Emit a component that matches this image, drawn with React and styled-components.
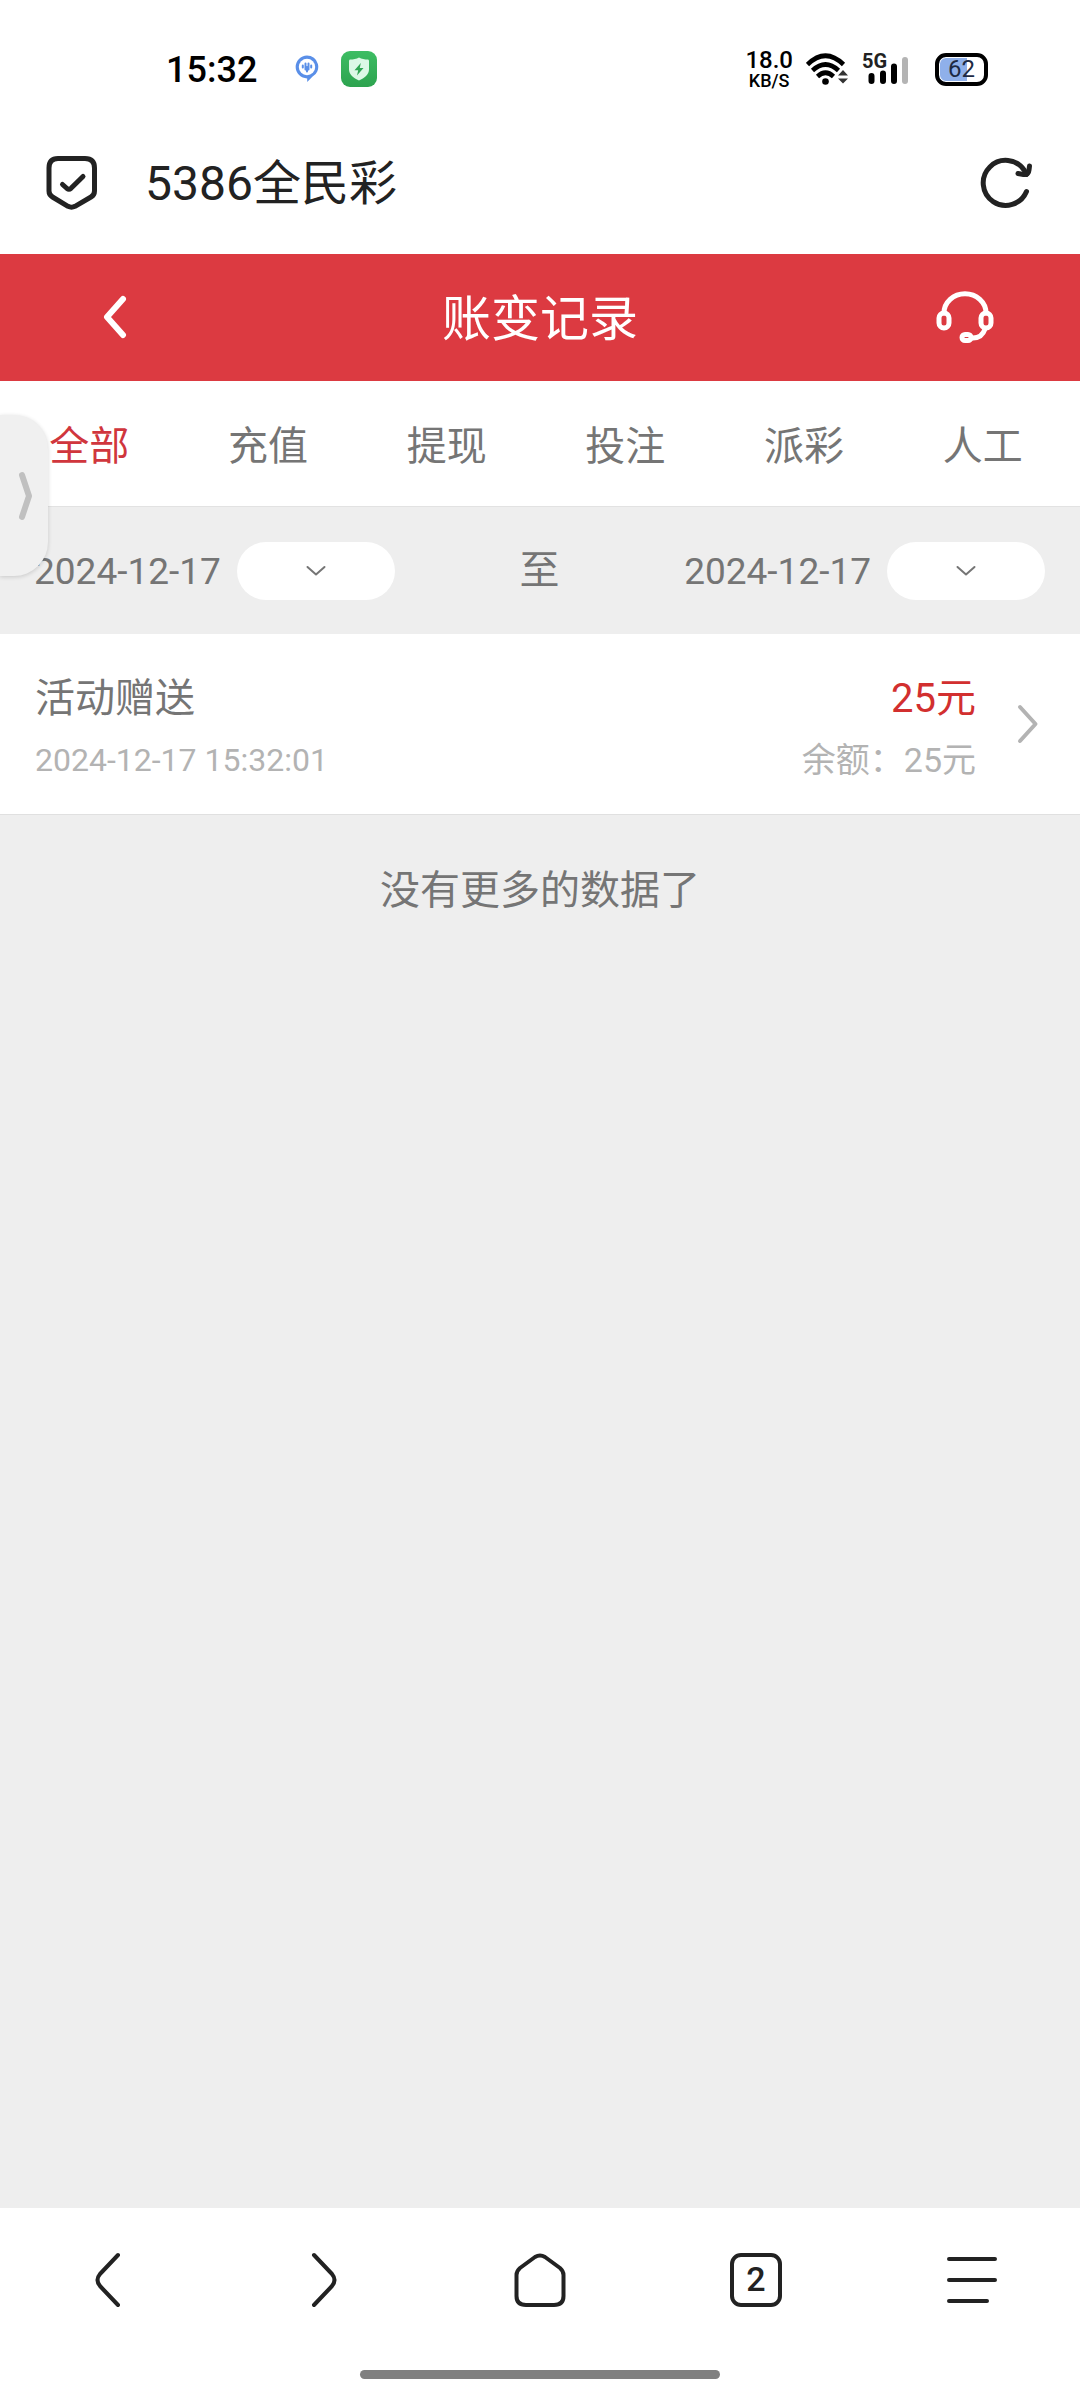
import { useState } from 'react';
import styled, { createGlobalStyle } from 'styled-components';

const GlobalStyle = createGlobalStyle`
	* {
		box-sizing: border-box;
	}

	body {
		margin: 0;
		background: #eee;
		font-family: Roboto, "Noto Sans CJK SC", sans-serif;
		color: #757575;
	}

	button, select {
		margin: 0;
		padding: 0;
		border: 0;
		background: none;
		color: inherit;
		font: inherit;
		cursor: pointer;
	}

	svg {
		display: block;
		flex: none;
	}
`;

const Page = styled.div`
	display: flex;
	flex-direction: column;
	min-height: 100vh;
`;

const StatusBar = styled.div`
	display: flex;
	align-items: center;
	justify-content: space-between;
	height: 110px;
	padding: 28px 92px 0 166px;
	background: #fff;
	color: #000;
`;

const StatusGroup = styled.div`
	display: flex;
	align-items: center;
	gap: ${({ $gap }) => $gap}px;
`;

const Clock = styled.time`
	margin-right: 16px;
	padding-top: 2px;
	font-size: 36px;
	font-weight: 500;
	line-height: 40px;
`;

const NetSpeed = styled.div`
	display: flex;
	flex-direction: column;
	align-items: center;
	font-size: 18px;
	font-weight: 500;
	line-height: 18px;

	strong {
		font-size: 24px;
		font-weight: 500;
		line-height: 24px;
	}
`;

const Signal = styled.div`
	position: relative;

	span {
		position: absolute;
		top: 0;
		left: 0;
		font-size: 20px;
		font-weight: 700;
		line-height: 16px;
		color: #222;
	}
`;

const Battery = styled.div`
	width: 53px;
	height: 33px;
	margin-left: 12px;
	border: 4px solid #000;
	border-radius: 11px;
	background: linear-gradient(90deg, #8fb0ea 62%, #fff 62%);
	box-shadow: inset 0 0 0 1px #fff;
	font-size: 24px;
	line-height: 25px;
	text-align: center;
	color: #1d2a44;
`;

const BrowserBar = styled.div`
	display: flex;
	align-items: center;
	height: 144px;
	padding: 0 46px;
	background: #fff;
	color: #222;
`;

const SiteTitle = styled.div`
	flex: 1;
	margin-left: 48px;
	padding-top: 4px;
	font-size: 48px;
	line-height: 64px;
`;

const IconButton = styled.button`
	display: flex;
	align-items: center;
	justify-content: center;
`;

const Header = styled.header`
	display: flex;
	align-items: center;
	justify-content: space-between;
	height: 127px;
	padding: 0 85px;
	background: #dc3a41;
	color: #fff;

	${IconButton} {
		width: 60px;
		height: 60px;
	}
`;

const Title = styled.h1`
	margin: 0;
	padding-top: 4px;
	font-size: 49px;
	font-weight: 400;
	line-height: 64px;
`;

const Tabs = styled.nav`
	display: flex;
	height: 125px;
	padding-right: 8px;
	background: #fff;
`;

const Tab = styled.button`
	flex: 1;
	padding-top: 6px;
	font-size: 40px;
	line-height: 56px;
	color: ${({ $active }) => ($active ? '#d0363d' : '#757575')};
`;

const Filters = styled.div`
	display: flex;
	align-items: center;
	justify-content: space-between;
	height: 128px;
	padding: 0 35px 0 34px;
	border-top: 1px solid #e2e2e2;
	font-size: 40px;
	line-height: 56px;
`;

const DateField = styled.div`
	display: flex;
	align-items: center;
	gap: 16px;

	label {
		padding-top: 2px;
		font-size: 37px;
	}
`;

const Picker = styled.div`
	position: relative;

	select {
		display: block;
		width: 158px;
		height: 58px;
		border-radius: 29px;
		background: #fff;
		appearance: none;
	}

	svg {
		position: absolute;
		inset: 0;
		margin: auto;
		pointer-events: none;
	}
`;

const Record = styled.a`
	display: flex;
	align-items: center;
	height: 181px;
	padding: 0 41px 0 35px;
	border-bottom: 1px solid #e0e0e0;
	background: #fff;
	color: inherit;
	text-decoration: none;
`;

const RecordText = styled.div`
	display: flex;
	flex: 1;
	flex-direction: column;
	gap: 5px;
	align-items: ${({ $end }) => ($end ? 'flex-end' : 'flex-start')};
	margin-right: ${({ $end }) => ($end ? 41 : 0)}px;
	padding-top: 10px;
`;

const Main = styled.span`
	font-size: 40px;
	line-height: 56px;
	color: ${({ $red }) => ($red ? '#d22f2f' : '#757575')};
`;

const Sub = styled.span`
	font-size: ${({ $size }) => $size}px;
	line-height: 56px;
	color: #b3b3b3;
`;

const NoMore = styled.p`
	flex: 1;
	margin: 0;
	padding-top: 48px;
	font-size: 40px;
	line-height: 56px;
	text-align: center;
`;

const BottomNav = styled.nav`
	display: grid;
	grid-template-columns: repeat(5, 1fr);
	height: 144px;
	background: #fff;
	color: #222;
`;

const TabCount = styled.span`
	width: 52px;
	height: 54px;
	border: 4px solid #222;
	border-radius: 11px;
	font-size: 34px;
	font-weight: 500;
	line-height: 44px;
	text-align: center;
`;

const GestureArea = styled.div`
	display: flex;
	justify-content: center;
	height: 48px;
	padding-top: 18px;
	background: #fff;

	&::before {
		content: '';
		width: 33.33%;
		height: 9px;
		border-radius: 5px;
		background: #808080;
	}
`;

const Drawer = styled.button`
	position: absolute;
	top: 415px;
	left: 0;
	display: flex;
	align-items: center;
	justify-content: flex-end;
	width: 48px;
	height: 161px;
	padding-right: 15px;
	border-radius: 0 34px 34px 0;
	background: #f0f0f0;
	box-shadow: 0 1px 4px rgba(0, 0, 0, 0.16);
`;

const Stroke = ({ w, h, size = 4, color = 'currentColor', children }) => (
	<svg
		width={w}
		height={h}
		viewBox={`0 0 ${w} ${h}`}
		fill="none"
		stroke={color}
		strokeWidth={size}
		strokeLinecap="round"
		strokeLinejoin="round"
		aria-hidden="true"
	>
		{children}
	</svg>
);

const VoiceIcon = () => (
	<svg width="24" height="28" viewBox="0 0 24 28" aria-hidden="true">
		<path d="M12 0.5a11.3 11.3 0 0 1 5.6 21.1L12.2 27v-3.6A11.4 11.4 0 0 1 12 .5z" fill="#5a8fe8" />
		<circle cx="12" cy="12" r="8.2" fill="#fff" />
		<path d="M7.800 10.500v2M10.500 8.500v6M13.500 8.500v6M16.200 10.500v2M12 12v4.500" stroke="#5a8fe8" strokeWidth="2" strokeLinecap="round" />
	</svg>
);

const GuardIcon = () => (
	<svg width="36" height="36" viewBox="0 0 36 36" aria-hidden="true">
		<defs>
			<linearGradient id="guard" x1="0" y1="0" x2="0" y2="1">
				<stop offset="0" stopColor="#3dbd63" />
				<stop offset="1" stopColor="#2da34f" />
			</linearGradient>
		</defs>
		<rect width="36" height="36" rx="9" fill="url(#guard)" />
		<path d="M18 6.500c2.500 1.500 6 2 8.500 2 1 0 1.500.6 1.500 1.500v8.500c0 5-4.500 8.500-10 11-5.500-2.500-10-6-10-11V10c0-.9.5-1.500 1.500-1.500 2.500 0 6-.5 8.500-2z" fill="#dcf8e6" />
		<path d="M19.800 12l-6.300 7.300h3.700L16 24.500l6.500-7.500h-3.700z" fill="#2fa552" />
	</svg>
);

const WifiIcon = () => (
	<svg width="43" height="32" viewBox="0 0 43 32" fill="none" aria-hidden="true">
		<path d="M1.500 11.500Q19.500-6 37.500 11.500M6.500 17.500Q19.500 5.500 32.500 17.500M11.500 23.500Q19.500 16 27.500 23.500" stroke="#000" strokeWidth="4.600" />
		<circle cx="19.500" cy="28.500" r="3.300" fill="#000" />
		<path d="M32 22.500l5-5.500 5 5.500zM32 25.500l5 5 5-5z" fill="#333" />
	</svg>
);

const BarsIcon = () => (
	<svg width="48" height="32" viewBox="0 0 48 32" strokeWidth="6" strokeLinecap="round" aria-hidden="true">
		<path d="M9.500 23v5M21 20.500v7.500M32 13.500v14.500" stroke="#000" />
		<path d="M43 7v21" stroke="#b4b4b4" />
	</svg>
);

const tabs = ['全部', '充值', '提现', '投注', '派彩', '人工'];

const records = [
	{ id: 1, name: '活动赠送', time: '2024-12-17 15:32:01', amount: '25元', balance: '25元' },
];

const DatePicker = ({ id, date }) => (
	<DateField>
		<label htmlFor={id}>{date}</label>
		<Picker>
			<select id={id} defaultValue="">
				<option value="" />
			</select>
			<Stroke w={20} h={12} size={2}>
				<path d="M1.500 2L10 9.500 18.500 2" />
			</Stroke>
		</Picker>
	</DateField>
);

const App = () => {
	const [active, setActive] = useState(tabs[0]);

	return (
		<Page>
			<GlobalStyle />
			<StatusBar>
				<StatusGroup $gap={22}>
					<Clock>15:32</Clock>
					<VoiceIcon />
					<GuardIcon />
				</StatusGroup>
				<StatusGroup $gap={13}>
					<NetSpeed>
						<strong>18.0</strong>
						<span>KB/S</span>
					</NetSpeed>
					<WifiIcon />
					<Signal>
						<BarsIcon />
						<span>5G</span>
					</Signal>
					<Battery>62</Battery>
				</StatusGroup>
			</StatusBar>

			<BrowserBar>
				<Stroke w={51} h={56} size={5}>
					<path d="M12 4.500H39Q48.500 4.500 48.500 14V37Q48.500 41 45 43L29 52.300Q25.500 54 22 52.300L6.500 43Q3 41 3 37V14Q3 4.500 12 4.500z" />
					<path d="M16.500 30.500L21 34.500Q23 36 25 34.300L37 22.500" />
				</Stroke>
				<SiteTitle>5386全民彩</SiteTitle>
				<IconButton type="button" aria-label="刷新">
					<Stroke w={54} h={54} size={5}>
						<path d="M46.500 36.500A22.500 22.500 0 1 1 44.500 15.500L46.500 19.500" />
						<path d="M38 18.500L43.500 19.500Q48.500 20 49 15L49.500 11" />
					</Stroke>
				</IconButton>
			</BrowserBar>

			<Header>
				<IconButton type="button" aria-label="返回">
					<Stroke w={24} h={46} size={6}>
						<path d="M20 4L4 22 20 40" />
					</Stroke>
				</IconButton>
				<Title>账变记录</Title>
				<IconButton type="button" aria-label="客服">
					<Stroke w={58} h={54} size={5}>
						<path d="M8 22A21 19.300 0 0 1 50 22" />
						<rect x="3" y="22" width="10" height="15" rx="5" />
						<rect x="45" y="22" width="10" height="15" rx="5" />
						<path d="M49 38Q46 47 37 47" />
						<rect x="26" y="43.500" width="9" height="6" rx="3" />
					</Stroke>
				</IconButton>
			</Header>

			<Tabs>
				{tabs.map((tab) => (
					<Tab key={tab} type="button" $active={tab === active} onClick={() => setActive(tab)}>
						{tab}
					</Tab>
				))}
			</Tabs>

			<Filters>
				<DatePicker id="date-from" date="2024-12-17" />
				<span>至</span>
				<DatePicker id="date-to" date="2024-12-17" />
			</Filters>

			{records.map((record) => (
				<Record key={record.id} href="#record">
					<RecordText>
						<Main>{record.name}</Main>
						<Sub $size={32}>{record.time}</Sub>
					</RecordText>
					<RecordText $end>
						<Main $red>{record.amount}</Main>
						<Sub $size={34}>余额：{record.balance}</Sub>
					</RecordText>
					<Stroke w={22} h={42} color="#b3b3b3">
						<path d="M3 4L18.500 21 3 38" />
					</Stroke>
				</Record>
			))}

			<NoMore>没有更多的数据了</NoMore>

			<BottomNav>
				<IconButton type="button" aria-label="后退">
					<Stroke w={26} h={56}>
						<path d="M23 3L5 22Q0 28 5 34L23 53" />
					</Stroke>
				</IconButton>
				<IconButton type="button" aria-label="前进">
					<Stroke w={26} h={56}>
						<path d="M3 3L21 22Q26 28 21 34L3 53" />
					</Stroke>
				</IconButton>
				<IconButton type="button" aria-label="主页">
					<Stroke w={54} h={56}>
						<path d="M22 5Q27 2 32 5L47 16Q50.500 19 50.500 23V44Q50.500 53 41 53H13Q3.500 53 3.500 44V23Q3.500 19 7 16z" />
					</Stroke>
				</IconButton>
				<IconButton type="button" aria-label="标签页">
					<TabCount>2</TabCount>
				</IconButton>
				<IconButton type="button" aria-label="菜单">
					<Stroke w={50} h={48}>
						<path d="M2 3H48M2 24H48M2 45H40" />
					</Stroke>
				</IconButton>
			</BottomNav>
			<GestureArea />

			<Drawer type="button" aria-label="展开侧栏">
				<Stroke w={16} h={50} size={6} color="#c0c0c0">
					<path d="M5 4L12 25 5 46" />
				</Stroke>
			</Drawer>
		</Page>
	);
};

export default App;
